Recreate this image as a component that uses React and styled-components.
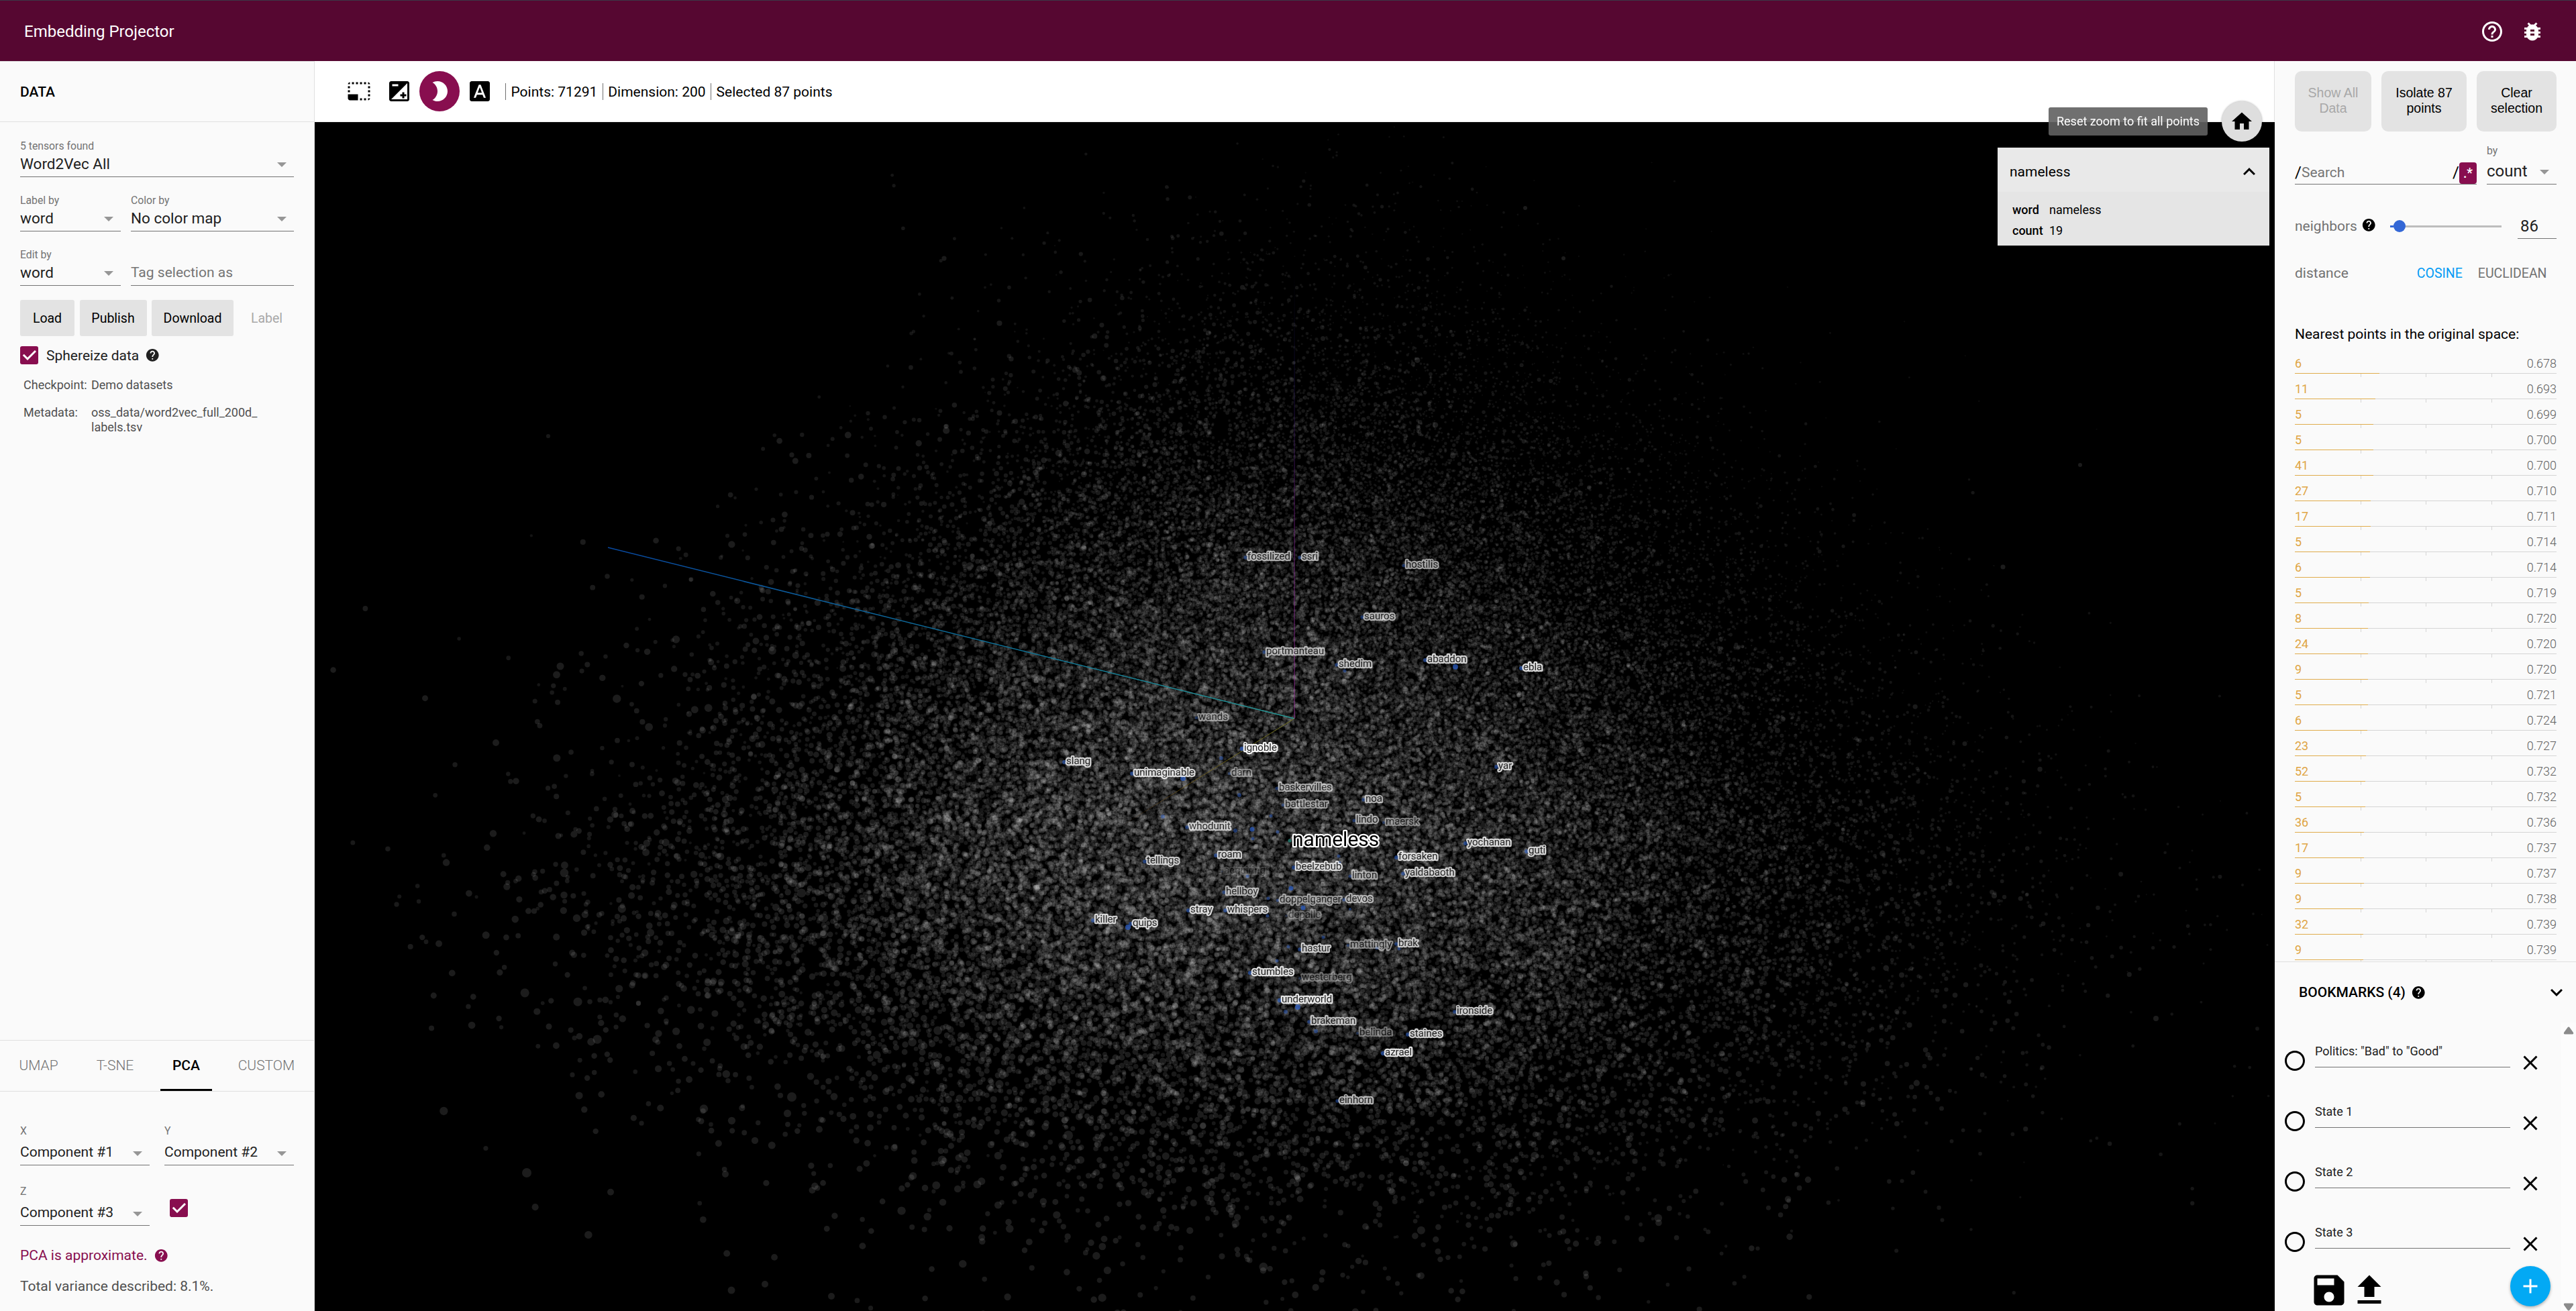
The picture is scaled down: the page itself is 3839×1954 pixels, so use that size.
import React, { useLayoutEffect, useRef } from "react";
import styled, { createGlobalStyle } from "styled-components";

const GlobalStyle = createGlobalStyle`
  * { box-sizing: border-box; }
  html, body { margin: 0; padding: 0; height: 100%; overflow: hidden; }
  body { font-family: Roboto, "Noto Sans", sans-serif; color: #000; background: #fafafa; }
  button, input { font: inherit; border: 0; padding: 0; background: none; }
`;

/* ---------- icons ---------- */
const PATHS = {
  helpOutline:
    "M11 18h2v-2h-2v2zm1-16C6.48 2 2 6.48 2 12s4.48 10 10 10 10-4.48 10-10S17.52 2 12 2zm0 18c-4.41 0-8-3.59-8-8s3.59-8 8-8 8 3.59 8 8-3.59 8-8 8zm0-14c-2.21 0-4 1.79-4 4h2c0-1.1.9-2 2-2s2 .9 2 2c0 2-3 1.75-3 5h2c0-2.25 3-2.5 3-5 0-2.21-1.79-4-4-4z",
  help:
    "M12 2C6.48 2 2 6.48 2 12s4.48 10 10 10 10-4.48 10-10S17.52 2 12 2zm1 17h-2v-2h2v2zm2.07-7.75l-.9.92C13.45 12.9 13 13.5 13 15h-2v-.5c0-1.1.45-2.1 1.17-2.83l1.24-1.26c.37-.36.59-.86.59-1.41 0-1.1-.9-2-2-2s-2 .9-2 2H8c0-2.21 1.79-4 4-4s4 1.79 4 4c0 .88-.36 1.68-.93 2.25z",
  bug:
    "M20 8h-2.81c-.45-.78-1.07-1.45-1.82-1.96L17 4.41 15.59 3l-2.17 2.17C12.96 5.06 12.49 5 12 5c-.49 0-.96.06-1.41.17L8.41 3 7 4.41l1.62 1.63C7.88 6.55 7.26 7.22 6.81 8H4v2h2.09c-.05.33-.09.66-.09 1v1H4v2h2v1c0 .34.04.67.09 1H4v2h2.81c1.04 1.79 2.97 3 5.19 3s4.15-1.21 5.19-3H20v-2h-2.09c.05-.33.09-.66.09-1v-1h2v-2h-2v-1c0-.34-.04-.67-.09-1H20V8zm-6 8h-4v-2h4v2zm0-4h-4v-2h4v2z",
  select:
    "M23 15h-2v2h2v-2zm0-4h-2v2h2v-2zm0 8h-2v2c1 0 2-1 2-2zM15 3h-2v2h2V3zm8 4h-2v2h2V7zm-2-4v2h2c0-1-1-2-2-2zM3 21h8v-6H1v4c0 1.1.9 2 2 2zM3 7H1v2h2V7zm12 12h-2v2h2v-2zm4-16h-2v2h2V3zm0 16h-2v2h2v-2zM3 3C2 3 1 4 1 5h2V3zm0 8H1v2h2v-2zm8-8H9v2h2V3zM7 3H5v2h2V3z",
  exposure:
    "M15 17v2h2v-2h2v-2h-2v-2h-2v2h-2v2h2zm5-15H4c-1.1 0-2 .9-2 2v16c0 1.1.9 2 2 2h16c1.1 0 2-.9 2-2V4c0-1.1-.9-2-2-2zM5 5h6v2H5V5zm15 15H4L20 4v16z",
  moon:
    "M10 2c-1.82 0-3.53.5-5 1.35C7.99 5.08 10 8.3 10 12s-2.01 6.92-5 8.65C6.47 21.5 8.18 22 10 22c5.52 0 10-4.48 10-10S15.52 2 10 2z",
  font:
    "M9.93 13.5h4.14L12 7.98zM20 2H4c-1.1 0-2 .9-2 2v16c0 1.1.9 2 2 2h16c1.1 0 2-.9 2-2V4c0-1.1-.9-2-2-2zm-4.05 16.5l-1.14-3H9.17l-1.12 3H5.96l5.11-13h1.86l5.11 13h-2.09z",
  home: "M10 20v-6h4v6h5v-8h3L12 3 2 12h3v8z",
  less: "M12 8l-6 6 1.41 1.41L12 10.83l4.59 4.58L18 14z",
  more: "M16.59 8.59L12 13.17 7.41 8.59 6 10l6 6 6-6z",
  radio:
    "M12 2C6.48 2 2 6.48 2 12s4.48 10 10 10 10-4.48 10-10S17.52 2 12 2zm0 18c-4.42 0-8-3.58-8-8s3.58-8 8-8 8 3.58 8 8-3.58 8-8 8z",
  close:
    "M19 6.41L17.59 5 12 10.59 6.41 5 5 6.41 10.59 12 5 17.59 6.41 19 12 13.41 17.59 19 19 17.59 13.41 12z",
  save:
    "M17 3H5c-1.11 0-2 .9-2 2v14c0 1.1.89 2 2 2h14c1.1 0 2-.9 2-2V7l-4-4zm-5 16c-1.66 0-3-1.34-3-3s1.34-3 3-3 3 1.34 3 3-1.34 3-3 3zm3-10H5V5h10v4z",
  upload: "M9 16h6v-6h4l-7-7-7 7h4zm-4 2h14v2H5z",
  add: "M19 13h-6v6h-2v-6H5v-2h6V5h2v6h6v2z",
};

const Svg = styled.svg`
  display: block;
  flex: none;
  width: ${(p) => p.$size}px;
  height: ${(p) => p.$size}px;
  fill: ${(p) => p.$color || "#000"};
`;
const Icon = ({ name, size = 36, color }) => (
  <Svg viewBox="0 0 24 24" $size={size} $color={color}>
    <path d={PATHS[name]} />
  </Svg>
);

/* ---------- shell ---------- */
const Page = styled.div`
  display: flex;
  flex-direction: column;
  width: 3839px;
  height: 1954px;
  background: #fafafa;
`;
const AppBar = styled.header`
  display: flex;
  align-items: center;
  justify-content: space-between;
  flex: none;
  height: 91px;
  padding: 1px 47px 0 36px;
  border-top: 1px solid #3b3846;
  background: #560731;
  color: #fff;
`;
const AppTitle = styled.h1`
  margin: 0;
  font-size: 24px;
  font-weight: 400;
`;
const AppActions = styled.div`
  display: flex;
  gap: 24px;
`;
const Body = styled.div`
  display: flex;
  flex: 1;
  min-height: 0;
`;

/* ---------- left panel ---------- */
const LeftPanel = styled.aside`
  display: flex;
  flex-direction: column;
  flex: none;
  width: 469px;
  border-top: 1px solid #e0e0e0;
  border-right: 1px solid #e0e0e0;
`;
const PanelHeader = styled.div`
  display: flex;
  align-items: center;
  flex: none;
  height: 90px;
  padding: 0 30px;
  border-bottom: 1px solid #e0e0e0;
  font-size: 21px;
  font-weight: 500;
`;
const DataBody = styled.div`
  flex: 1;
  padding: 24px 30px 0;
`;
const FieldRow = styled.div`
  display: grid;
  grid-template-columns: ${(p) => p.$cols};
  column-gap: ${(p) => p.$gap}px;
  margin-bottom: ${(p) => p.$after}px;
`;
const Field = styled.label`
  display: flex;
  flex-direction: column;
  border-bottom: 1px solid #737373;
  height: ${(p) => p.$height}px;
`;
const FieldLabel = styled.span`
  height: ${(p) => p.$height || 22}px;
  line-height: 23px;
  font-size: 15.75px;
  color: #737373;
`;
const FieldValue = styled.span`
  display: flex;
  align-items: center;
  justify-content: space-between;
  flex: 1;
  padding: 0 11px 4px 0;
  font-size: ${(p) => p.$size}px;
  color: ${(p) => p.$color || "#212121"};
  white-space: nowrap;
`;
const Caret = styled.i`
  width: 0;
  height: 0;
  margin-top: 4px;
  border: 7px solid transparent;
  border-top-color: #969696;
  border-bottom-width: 0;
`;
const SelectField = ({ label, value, height = 58, size = 22.5, labelHeight }) => (
  <Field $height={height}>
    <FieldLabel $height={labelHeight}>{label}</FieldLabel>
    <FieldValue $size={size}>
      {value}
      <Caret />
    </FieldValue>
  </Field>
);
const ButtonRow = styled.div`
  display: grid;
  grid-template-columns: 81px 100px 122px 84px;
  column-gap: 7.5px;
  margin: -2px 0 15px;
`;
const FlatButton = styled.button`
  height: 54px;
  border-radius: 3px;
  font-size: 19.5px;
  background: ${(p) => (p.$plain ? "transparent" : "#e3e3e3")};
  color: ${(p) => (p.$plain ? "#a8a8a8" : "#000")};
`;
const CheckLine = styled.div`
  display: flex;
  align-items: center;
  height: 27px;
  font-size: 21px;
  color: #212121;
`;
const CheckText = styled.span`
  margin: 0 9px 0 12px;
`;
const CheckBox = styled.span`
  display: flex;
  align-items: center;
  justify-content: center;
  flex: none;
  width: 27px;
  height: 27px;
  border-radius: 3px;
  background: #880e4f;
  svg { width: 21px; height: 21px; fill: none; stroke: #fff; stroke-width: 3; }
`;
const Check = () => (
  <CheckBox>
    <svg viewBox="0 0 21 21">
      <path d="M1.8 9.8 L8 16 L20 4" />
    </svg>
  </CheckBox>
);
const MetaGrid = styled.dl`
  display: grid;
  grid-template-columns: 101px 260px;
  row-gap: 19px;
  margin: 20px 0 0 5px;
  font-size: 18px;
  line-height: 22px;
  color: #505050;
  dd, dt { margin: 0; }
`;

const Projections = styled.section`
  flex: none;
  height: 404px;
  border-top: 1px solid #e0e0e0;
`;
const Tabs = styled.nav`
  display: flex;
  height: 76px;
  padding: 0 9px;
  border-bottom: 1px solid #e0e0e0;
`;
const Tab = styled.a`
  flex: none;
  width: ${(p) => p.$width}px;
  padding-top: 2px;
  line-height: 70px;
  text-align: center;
  font-size: 21px;
  font-weight: ${(p) => (p.$active ? 500 : 300)};
  color: ${(p) => (p.$active ? "#000" : "#727272")};
  border-bottom: ${(p) => (p.$active ? "3px solid #000" : "3px solid transparent")};
  margin: ${(p) => p.$margin || "0"};
`;
const PcaBody = styled.div`
  padding: 47px 30px 0;
`;
const ZCheck = styled.div`
  padding: 23px 0 0 8px;
`;
const PcaNote = styled.div`
  display: flex;
  align-items: center;
  gap: 9px;
  height: 26px;
  margin-top: 31px;
  font-size: 21px;
  color: #880e4f;
`;
const Variance = styled.div`
  margin-top: 20px;
  line-height: 26px;
  font-size: 21px;
  color: #505050;
`;

/* ---------- centre ---------- */
const Center = styled.main`
  display: flex;
  flex-direction: column;
  flex: none;
  position: relative;
  width: 2921px;
`;
const Toolbar = styled.div`
  display: flex;
  align-items: center;
  flex: none;
  height: 91px;
  padding-left: 36px;
  background: #fff;
  border-right: 1px solid #e0e0e0;
  border-bottom: 1px solid #eee;
  font-size: 21px;
`;
const ToolButton = styled.button`
  display: flex;
  align-items: center;
  justify-content: center;
  width: 60px;
  height: 60px;
  border-radius: 50%;
  background: ${(p) => (p.$active ? "#880e4f" : "transparent")};
`;
const Stat = styled.span`
  display: block;
  height: 25px;
  line-height: 26px;
  margin-left: ${(p) => p.$gap}px;
  padding-left: 7.5px;
  border-left: 1px solid #707070;
  white-space: nowrap;
`;
const Scatter = styled.div`
  position: relative;
  flex: 1;
  background: #000;
  overflow: hidden;
`;
const Layer = styled.canvas`
  position: absolute;
  inset: 0;
`;
const Overlay = styled.svg`
  position: absolute;
  inset: 0;
  width: 2921px;
  height: 1772px;
`;
const PointLabel = styled.text`
  font-family: Roboto, "Noto Sans", sans-serif;
  font-size: ${(p) => (p.$big ? 30 : 15)}px;
  fill: ${(p) => (p.$big ? "#000" : "#222")};
  stroke: #fff;
  stroke-width: ${(p) => (p.$big ? 4.5 : 4.5)}px;
  stroke-linejoin: round;
  paint-order: stroke;
`;
const FloatingTip = styled.div`
  position: absolute;
  top: 69px;
  right: 100px;
  width: 237px;
  height: 42px;
  border-radius: 3px;
  background: rgba(97, 97, 97, 0.9);
  color: #fff;
  font-size: 18px;
  line-height: 42px;
  text-align: center;
`;
const HomeButton = styled.button`
  position: absolute;
  top: 60px;
  right: 19px;
  display: flex;
  align-items: center;
  justify-content: center;
  width: 60px;
  height: 60px;
  border-radius: 50%;
  background: #dedede;
  box-shadow: 0 0 3px rgba(0, 0, 0, 0.35);
`;
const MetaCard = styled.div`
  position: absolute;
  top: 129px;
  right: 8px;
  width: 405px;
  height: 146px;
  background: #e5e5e5;
`;
const MetaCardHead = styled.div`
  display: flex;
  align-items: center;
  justify-content: space-between;
  height: 66px;
  padding: 5px 12px 0 18px;
  background: #e9e9e9;
  font-size: 21px;
`;
const MetaTable = styled.dl`
  display: grid;
  grid-template-columns: 55px 1fr;
  margin: 11px 0 0 22px;
  font-size: 18px;
  line-height: 31px;
  dt { font-weight: 500; }
  dd { margin: 0; }
`;

/* ---------- right panel ---------- */
const RightPanel = styled.aside`
  display: flex;
  flex-direction: column;
  flex: 1;
  min-width: 0;
`;
const Inspector = styled.section`
  height: 1342px;
  padding: 15px 29px 0 30px;
  overflow: hidden;
`;
const SelectionButtons = styled.div`
  display: grid;
  grid-template-columns: 114px 127px 119px;
  gap: 15px;
`;
const SelectionButton = styled.button`
  height: 90px;
  padding: 0 14px 2px;
  border-radius: 10px;
  background: #e3e3e3;
  color: ${(p) => (p.$disabled ? "#a8a8a8" : "#000")};
  font-family: "Liberation Sans", Arial, sans-serif;
  font-size: 19.5px;
  line-height: 23px;
`;
const SearchRow = styled.div`
  display: grid;
  grid-template-columns: 271px 104px;
  gap: 15px;
  align-items: end;
  height: 79px;
`;
const SearchBox = styled.div`
  display: flex;
  align-items: center;
  height: 33px;
  border-bottom: 1px solid #737373;
  font-size: 21px;
`;
const Slash = styled.span`
  padding-bottom: 2px;
  font-size: 24px;
`;
const Placeholder = styled.span`
  flex: 1;
  padding-bottom: 2px;
  color: #757575;
`;
const RegexToggle = styled.button`
  width: 26px;
  height: 32px;
  border-radius: 4px;
  background: #880e4f;
  color: #fff;
  font-size: 19.5px;
  font-weight: 500;
`;
const NeighborRow = styled.div`
  display: grid;
  grid-template-columns: 98px 44px 166px 82px;
  align-items: center;
  height: 38px;
  margin-top: 43px;
  font-size: 21px;
  color: #727272;
`;
const HelpSlot = styled.span`
  padding: 0 0 4px 1px;
`;
const Slider = styled.span`
  display: flex;
  align-items: center;
  height: 18px;
  background: linear-gradient(#bdbdbd, #bdbdbd) 0 50% / 100% 3px no-repeat;
`;
const SliderFill = styled.span`
  width: 5px;
  height: 3px;
  background: #3367d6;
`;
const SliderKnob = styled.span`
  width: 18px;
  height: 18px;
  border-radius: 50%;
  background: #3367d6;
`;
const NumberBox = styled.span`
  justify-self: end;
  width: 58px;
  height: 38px;
  padding-left: 4px;
  line-height: 38px;
  border-bottom: 1px solid #737373;
  font-size: 24px;
  color: #212121;
`;
const DistanceRow = styled.div`
  display: flex;
  align-items: baseline;
  margin-top: 37px;
  font-size: 21px;
  line-height: 28px;
  color: #727272;
`;
const DistanceOption = styled.a`
  margin-left: ${(p) => p.$gap}px;
  font-size: 19.5px;
  color: ${(p) => (p.$active ? "#039bf5" : "#727272")};
`;
const ListTitle = styled.h2`
  margin: 62px 0 0;
  font-size: 21px;
  font-weight: 400;
  line-height: 28px;
`;
const NeighborList = styled.div`
  margin-top: 14px;
`;
const Neighbor = styled.div`
  height: 38px;
`;
const NeighborText = styled.div`
  display: flex;
  justify-content: space-between;
  height: 30px;
  padding-top: 5px;
  line-height: 22px;
  font-size: 18px;
`;
const NeighborCount = styled.span`
  color: #e0a544;
`;
const NeighborValue = styled.span`
  color: #5f5f5f;
  font-weight: 300;
`;
const Track = styled.div`
  height: 1px;
  background: #d5d5d5;
`;
const TrackFill = styled.div`
  height: 1px;
  background: #e0ac4c;
`;
const Ticks = styled.div`
  display: grid;
  grid-template-columns: 99px 97px 98px;
  height: 5px;
  span { border-right: 1px solid #d5d5d5; }
`;

const Bookmarks = styled.section`
  display: flex;
  flex-direction: column;
  flex: 1;
  border-top: 1px solid #e0e0e0;
`;
const BookmarkHead = styled.div`
  display: flex;
  align-items: center;
  flex: none;
  height: 90px;
  padding: 0 11px 0 36px;
  font-size: 21px;
  font-weight: 500;
`;
const BookmarkTitle = styled.span`
  margin-right: 8px;
`;
const HeadSpacer = styled.span`
  flex: 1;
`;
const BookmarkBody = styled.div`
  display: flex;
  flex: 1;
  min-height: 0;
`;
const BookmarkMain = styled.div`
  flex: 1;
  padding: 20px 0 0 12px;
`;
const Bookmark = styled.div`
  display: grid;
  grid-template-columns: 36px 291px 36px;
  column-gap: 12px;
  height: 90px;
`;
const BookmarkName = styled.div`
  height: 47px;
  padding-top: 11px;
  line-height: 24px;
  border-bottom: 1px solid #737373;
  font-size: 18px;
  color: #212121;
`;
const RadioSlot = styled.span`
  padding-top: 19px;
`;
const CloseSlot = styled.span`
  padding-top: 22px;
`;
const BookmarkActions = styled.div`
  display: flex;
  align-items: flex-start;
  margin: -11px 0 0 39px;
`;
const Fab = styled.button`
  display: flex;
  align-items: center;
  justify-content: center;
  width: 60px;
  height: 60px;
  margin: -6px 0 0 180px;
  border-radius: 50%;
  background: #03a9f4;
  box-shadow: 0 2px 4px rgba(0, 0, 0, 0.3);
`;
const ScrollTrack = styled.div`
  display: flex;
  flex-direction: column;
  align-items: center;
  justify-content: space-between;
  flex: none;
  width: 22px;
  padding: 6px 0 0;
  background: #fcfcfc;
`;
const Arrow = styled.svg`
  width: 16px;
  height: 12px;
  fill: #8b8b8b;
`;

/* ---------- scatter data ---------- */
const LABELS = [
  ["fossilized", 1858, 835, 0.65], ["ssri", 1939, 835, 0.65], ["hostilis", 2094, 847, 0.6],
  ["sauros", 2032, 924, 0.65], ["portmanteau", 1886, 976, 0.65], ["shedim", 1994, 995, 0.7],
  ["abaddon", 2126, 988, 0.8], ["ebla", 2269, 1000, 0.85], ["wands", 1785, 1074, 0.5],
  ["ignoble", 1853, 1120, 0.95], ["slang", 1588, 1140, 0.8], ["unimaginable", 1689, 1157, 0.82],
  ["darn", 1834, 1157, 0.45], ["baskervilles", 1905, 1179, 0.6], ["battlestar", 1914, 1204, 0.55],
  ["noa", 2034, 1196, 0.65], ["lindo", 2020, 1227, 0.6], ["maersk", 2064, 1230, 0.45],
  ["yar", 2232, 1147, 0.8], ["whodunit", 1771, 1237, 0.72], ["roam", 1814, 1279, 0.78],
  ["tellings", 1708, 1288, 0.75], ["forsaken", 2083, 1282, 0.82], ["yochanan", 2186, 1261, 0.82],
  ["guti", 2277, 1273, 0.8], ["beelzebub", 1930, 1297, 0.8], ["linton", 2014, 1310, 0.6],
  ["yaldabaoth", 2093, 1306, 0.75], ["acquiring", 1823, 1303, 0.16], ["hellboy", 1826, 1334, 0.65],
  ["doppelganger", 1906, 1346, 0.55], ["devos", 2005, 1345, 0.62], ["stray", 1773, 1361, 0.82],
  ["whispers", 1828, 1361, 0.78], ["depalle", 1919, 1369, 0.28], ["killer", 1631, 1376, 0.8],
  ["quips", 1687, 1381, 0.82], ["hastur", 1939, 1419, 0.75], ["mattingly", 2011, 1413, 0.5],
  ["brak", 2083, 1411, 0.72], ["stumbles", 1865, 1454, 0.85], ["westerberg", 1939, 1462, 0.35],
  ["underworld", 1909, 1495, 0.88], ["ironside", 2170, 1512, 0.75], ["brakeman", 1953, 1527, 0.7],
  ["belinda", 2025, 1544, 0.4], ["staines", 2100, 1546, 0.8], ["azrael", 2063, 1574, 0.88],
  ["einhorn", 1995, 1645, 0.68],
];
const EXTRA_DOTS = [
  [1820, 1130, 3], [1763, 1160, 4], [1847, 1185, 3], [1894, 1216, 2.5], [1841, 1238, 3],
  [1866, 1236, 3.5], [1867, 1250, 2.5], [1904, 1240, 2.5], [1995, 1276, 2.5], [1996, 1286, 2.5],
  [1859, 1306, 2.5], [1890, 1339, 2.5], [1924, 1324, 3.5], [1942, 1353, 3.5], [2012, 1355, 2],
  [1889, 1365, 2.5], [1733, 1217, 3], [2169, 994, 4], [2004, 1000, 2.5], [1681, 1382, 4],
  [1934, 1501, 4], [1916, 1508, 3], [1961, 1537, 3], [1903, 1432, 2.5], [1920, 1411, 2.5],
  [1972, 1397, 2.5], [2052, 1413, 2.5], [2085, 1414, 2.5],
];
const OX = 469;
const OY = 182;

function makeRandom(seed) {
  let s = seed >>> 0;
  return () => {
    s = (s + 0x6d2b79f5) >>> 0;
    let t = s;
    t = Math.imul(t ^ (t >>> 15), t | 1);
    t ^= t + Math.imul(t ^ (t >>> 7), t | 61);
    return ((t ^ (t >>> 14)) >>> 0) / 4294967296;
  };
}

/* A few far points that stand alone round the cloud. */
const OUTLIERS = [
  [739, 1107, 5], [785, 1748, 7], [835, 993, 5.5], [1140, 1914, 5], [1239, 1932, 5],
  [818, 1530, 4.5], [1045, 1671, 4.5], [1081, 1750, 5], [1180, 1635, 7], [3213, 1518, 4],
  [2972, 1335, 4], [2273, 310, 3], [2330, 385, 3], [3100, 693, 3], [2985, 845, 3.5],
];

function paintCloud(canvas) {
  const ctx = canvas.getContext("2d");
  const rnd = makeRandom(71291);
  const gauss = () => Math.sqrt(-2 * Math.log(1 - rnd())) * Math.cos(2 * Math.PI * rnd());
  const spread = () => {
    for (;;) {
      const a = rnd() * 5 - 2.5;
      const b = rnd() * 5 - 2.5;
      if (rnd() < Math.exp(-0.6931 * Math.pow(a * a + b * b, 1.18))) return [a, b];
    }
  };
  const dot = (x, y, r, alpha) => {
    ctx.fillStyle = `rgba(255,255,255,${alpha.toFixed(3)})`;
    ctx.beginPath();
    ctx.arc(x - OX, y - OY, r, 0, 6.2832);
    ctx.fill();
  };
  ctx.fillStyle = "#000";
  ctx.fillRect(0, 0, canvas.width, canvas.height);
  for (let i = 0; i < 71291; i++) {
    const [a, b] = rnd() < 0.025 ? [gauss() * 1.15, gauss() * 0.95] : spread();
    const depth = gauss();
    const near = Math.max(0.5, 1 + 0.12 * depth + 0.1 * b - 0.08 * a);
    const taper = Math.min(1.12, Math.max(0.55, 1 + 0.2 * b));
    const x = 1975 + a * 505 * taper;
    const y = 1150 + b * (b > 0 ? 340 : 385);
    const r = Math.min(7, Math.max(1, 2.6 * Math.pow(near, 2)));
    dot(x, y, r, Math.min(0.11, Math.max(0.04, 0.085 * near)));
  }
  OUTLIERS.forEach(([x, y, r]) => dot(x, y, r, 0.11));
}

function ScatterPlot() {
  const ref = useRef(null);
  useLayoutEffect(() => paintCloud(ref.current), []);
  return (
    <Scatter>
      <Layer ref={ref} width={2921} height={1772} />
      <Overlay viewBox={`${OX} ${OY} 2921 1772`}>
        <defs>
          <linearGradient id="axisX" gradientUnits="userSpaceOnUse" x1="906" y1="816" x2="1929" y2="1071">
            <stop offset="0" stopColor="#0848a0" />
            <stop offset="0.6" stopColor="#0f7295" />
            <stop offset="1" stopColor="#2a9c98" />
          </linearGradient>
          <linearGradient id="axisY" gradientUnits="userSpaceOnUse" x1="0" y1="1071" x2="0" y2="400">
            <stop offset="0" stopColor="#a035a0" stopOpacity="0.9" />
            <stop offset="0.45" stopColor="#7a1e8c" stopOpacity="0.7" />
            <stop offset="0.75" stopColor="#2a1a70" stopOpacity="0.4" />
            <stop offset="1" stopColor="#101050" stopOpacity="0" />
          </linearGradient>
          <linearGradient id="axisZ" gradientUnits="userSpaceOnUse" x1="1929" y1="1071" x2="1670" y2="1232">
            <stop offset="0" stopColor="#8a8a20" />
            <stop offset="0.6" stopColor="#6e5a14" />
            <stop offset="1" stopColor="#6a3000" stopOpacity="0" />
          </linearGradient>
        </defs>
        <line x1="906" y1="816" x2="1929" y2="1071" stroke="url(#axisX)" strokeWidth="1.5" />
        <path d="M1928.6 400h1v671h-1z" fill="url(#axisY)" />
        <line x1="1929" y1="1071" x2="1670" y2="1232" stroke="url(#axisZ)" strokeWidth="1" opacity="0.8" />
        {LABELS.map(([word, x, y, o]) => (
          <circle key={word} cx={x - 2} cy={y - 4} r={1.2 + o * 2.2} fill="#2b5cc0" opacity={o * 0.75} />
        ))}
        {EXTRA_DOTS.map(([x, y, r]) => (
          <circle key={`${x}-${y}`} cx={x} cy={y} r={r} fill="#2b5cc0" opacity={r > 3 ? 0.75 : 0.5} />
        ))}
        <circle cx="1922" cy="1253" r="2.6" fill="#1f6a60" />
        {LABELS.map(([word, x, y, o]) => (
          <PointLabel key={word} x={x + 1} y={y - 1} opacity={o}>
            {word}
          </PointLabel>
        ))}
        <PointLabel $big x="1926" y="1261">
          nameless
        </PointLabel>
      </Overlay>
    </Scatter>
  );
}

/* ---------- panels ---------- */
const NEIGHBORS = [
  [6, 0.678], [11, 0.693], [5, 0.699], [5, 0.7], [41, 0.7], [27, 0.71], [17, 0.711], [5, 0.714],
  [6, 0.714], [5, 0.719], [8, 0.72], [24, 0.72], [9, 0.72], [5, 0.721], [6, 0.724], [23, 0.727],
  [52, 0.732], [5, 0.732], [36, 0.736], [17, 0.737], [9, 0.737], [9, 0.738], [32, 0.739], [9, 0.739],
];
const BOOKMARKS = ['Politics: "Bad" to "Good"', "State 1", "State 2", "State 3"];

export default function App() {
  return (
    <Page>
      <GlobalStyle />
      <AppBar>
        <AppTitle>Embedding Projector</AppTitle>
        <AppActions>
          <Icon name="helpOutline" color="#fff" />
          <Icon name="bug" color="#fff" />
        </AppActions>
      </AppBar>
      <Body>
        <LeftPanel>
          <PanelHeader>DATA</PanelHeader>
          <DataBody>
            <FieldRow $cols="408px" $gap={0} $after={23}>
              <SelectField label="5 tensors found" value="Word2Vec All" />
            </FieldRow>
            <FieldRow $cols="150px 243px" $gap={15} $after={23}>
              <SelectField label="Label by" value="word" />
              <SelectField label="Color by" value="No color map" />
            </FieldRow>
            <FieldRow $cols="150px 243px" $gap={15} $after={23}>
              <SelectField label="Edit by" value="word" />
              <Field $height={58}>
                <FieldLabel />
                <FieldValue $size={21} $color="#757575">
                  Tag selection as
                </FieldValue>
              </Field>
            </FieldRow>
            <ButtonRow>
              <FlatButton>Load</FlatButton>
              <FlatButton>Publish</FlatButton>
              <FlatButton>Download</FlatButton>
              <FlatButton $plain>Label</FlatButton>
            </ButtonRow>
            <CheckLine>
              <Check />
              <CheckText>Sphereize data</CheckText>
              <Icon name="help" size={22.5} color="#212121" />
            </CheckLine>
            <MetaGrid>
              <dt>Checkpoint:</dt>
              <dd>Demo datasets</dd>
              <dt>Metadata:</dt>
              <dd>
                oss_data/word2vec_full_200d_
                <br />
                labels.tsv
              </dd>
            </MetaGrid>
          </DataBody>
          <Projections>
            <Tabs>
              <Tab $width={97}>UMAP</Tab>
              <Tab $width={97} $margin="0 0 0 17px">T-SNE</Tab>
              <Tab $width={77} $active $margin="0 0 0 19px">PCA</Tab>
              <Tab $width={124} $margin="0 0 0 19px">CUSTOM</Tab>
            </Tabs>
            <PcaBody>
              <FieldRow $cols="193px 193px" $gap={22} $after={27}>
                <SelectField label="X" value="Component #1" height={63} size={21} labelHeight={28} />
                <SelectField label="Y" value="Component #2" height={63} size={21} labelHeight={28} />
              </FieldRow>
              <FieldRow $cols="193px 193px" $gap={22} $after={0}>
                <SelectField label="Z" value="Component #3" height={63} size={21} labelHeight={28} />
                <ZCheck>
                  <Check />
                </ZCheck>
              </FieldRow>
              <PcaNote>
                PCA is approximate.
                <Icon name="help" size={22.5} color="#880e4f" />
              </PcaNote>
              <Variance>Total variance described: 8.1%.</Variance>
            </PcaBody>
          </Projections>
        </LeftPanel>

        <Center>
          <Toolbar>
            <ToolButton><Icon name="select" /></ToolButton>
            <ToolButton><Icon name="exposure" /></ToolButton>
            <ToolButton $active><Icon name="moon" color="#fff" /></ToolButton>
            <ToolButton><Icon name="font" /></ToolButton>
            <Stat $gap={8}>Points: 71291</Stat>
            <Stat $gap={7.5}>Dimension: 200</Stat>
            <Stat $gap={7.5}>Selected 87 points</Stat>
          </Toolbar>
          <ScatterPlot />
          <FloatingTip>Reset zoom to fit all points</FloatingTip>
          <HomeButton><Icon name="home" /></HomeButton>
          <MetaCard>
            <MetaCardHead>
              nameless
              <Icon name="less" />
            </MetaCardHead>
            <MetaTable>
              <dt>word</dt>
              <dd>nameless</dd>
              <dt>count</dt>
              <dd>19</dd>
            </MetaTable>
          </MetaCard>
        </Center>

        <RightPanel>
          <Inspector>
            <SelectionButtons>
              <SelectionButton $disabled>Show All Data</SelectionButton>
              <SelectionButton>Isolate 87 points</SelectionButton>
              <SelectionButton>Clear selection</SelectionButton>
            </SelectionButtons>
            <SearchRow>
              <SearchBox>
                <Slash>/</Slash>
                <Placeholder>Search</Placeholder>
                <Slash>/</Slash>
                <RegexToggle>.*</RegexToggle>
              </SearchBox>
              <SelectField label="by" value="count" height={62} size={24} labelHeight={26} />
            </SearchRow>
            <NeighborRow>
              neighbors
              <HelpSlot><Icon name="help" size={22.5} /></HelpSlot>
              <Slider>
                <SliderFill />
                <SliderKnob />
              </Slider>
              <NumberBox>86</NumberBox>
            </NeighborRow>
            <DistanceRow>
              distance
              <DistanceOption $active $gap={102}>COSINE</DistanceOption>
              <DistanceOption $gap={23}>EUCLIDEAN</DistanceOption>
            </DistanceRow>
            <ListTitle>Nearest points in the original space:</ListTitle>
            <NeighborList>
              {NEIGHBORS.map(([count, d], i) => (
                <Neighbor key={i}>
                  <NeighborText>
                    <NeighborCount>{count}</NeighborCount>
                    <NeighborValue>{d.toFixed(3)}</NeighborValue>
                  </NeighborText>
                  <Track>
                    <TrackFill style={{ width: `${(1 - d) * 100}%` }} />
                  </Track>
                  <Ticks><span /><span /><span /></Ticks>
                </Neighbor>
              ))}
            </NeighborList>
          </Inspector>
          <Bookmarks>
            <BookmarkHead>
              <BookmarkTitle>BOOKMARKS (4)</BookmarkTitle>
              <Icon name="help" size={22.5} />
              <HeadSpacer />
              <Icon name="more" />
            </BookmarkHead>
            <BookmarkBody>
              <BookmarkMain>
                {BOOKMARKS.map((name) => (
                  <Bookmark key={name}>
                    <RadioSlot><Icon name="radio" /></RadioSlot>
                    <BookmarkName>{name}</BookmarkName>
                    <CloseSlot><Icon name="close" /></CloseSlot>
                  </Bookmark>
                ))}
                <BookmarkActions>
                  <Icon name="save" size={60} />
                  <Icon name="upload" size={60} />
                  <Fab><Icon name="add" color="#fff" /></Fab>
                </BookmarkActions>
              </BookmarkMain>
              <ScrollTrack>
                <Arrow viewBox="0 0 16 12"><path d="M8 0.5 Q9 0.5 9.6 1.4 L15 9 Q15.8 11.3 14 11.5 H2 Q0.2 11.3 1 9 L6.4 1.4 Q7 0.5 8 0.5z" /></Arrow>
                <Arrow viewBox="0 0 16 12"><path d="M8 11.5 Q9 11.5 9.6 10.6 L15 3 Q15.8 0.7 14 0.5 H2 Q0.2 0.7 1 3 L6.4 10.6 Q7 11.5 8 11.5z" /></Arrow>
              </ScrollTrack>
            </BookmarkBody>
          </Bookmarks>
        </RightPanel>
      </Body>
    </Page>
  );
}
